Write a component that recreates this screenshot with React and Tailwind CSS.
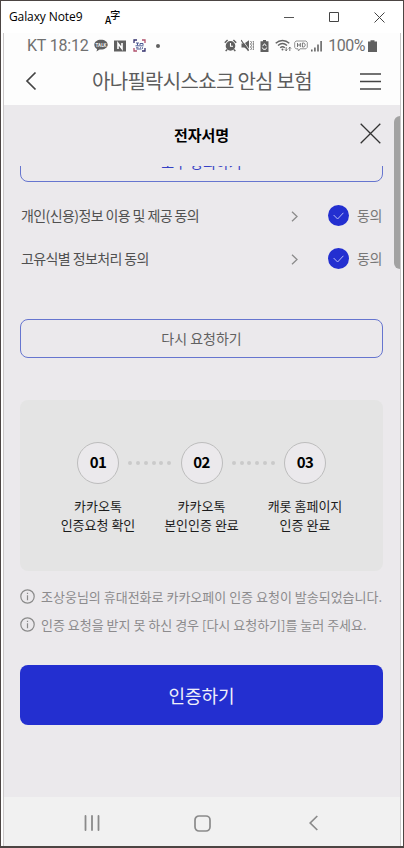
import React from "react";

const consents = ["개인(신용)정보 이용 및 제공 동의", "고유식별 정보처리 동의"];

const steps = [
  { no: "01", lines: ["카카오톡", "인증요청 확인"] },
  { no: "02", lines: ["카카오톡", "본인인증 완료"] },
  { no: "03", lines: ["캐롯 홈페이지", "인증 완료"] },
];

const notices = [
  "조상웅님의 휴대전화로 카카오페이 인증 요청이 발송되었습니다.",
  "인증 요청을 받지 못 하신 경우 [다시 요청하기]를 눌러 주세요.",
];

function WindowBar() {
  return (
    <div className="flex h-8 shrink-0 items-center bg-white pl-[8px] pr-[18px]">
      <span className="w-[96px] whitespace-nowrap font-['Open_Sans',sans-serif] text-[12px] tracking-[-0.1px] text-black">
        Galaxy Note9
      </span>
      <span className="flex items-end font-['Noto_Sans_CJK_KR',sans-serif] leading-none text-black">
        <span className="text-[10px] leading-[8px] font-medium">A</span>
        <span className="-ml-[1px] mb-[4px] text-[10px] leading-[10px] font-medium">字</span>
      </span>
      <div className="ml-auto flex items-center gap-[35px]">
        <svg width="10" height="10" viewBox="0 0 10 10" stroke="#555" fill="none">
          <path d="M0 5.5h10" />
        </svg>
        <svg width="10" height="10" viewBox="0 0 10 10" stroke="#444" fill="none">
          <path d="M.5.5h9v9h-9z" />
        </svg>
        <svg width="11" height="11" viewBox="0 0 11 11" stroke="#444" fill="none">
          <path d="M.5.5l10 10M10.500.5l-10 10" />
        </svg>
      </div>
    </div>
  );
}

function StatusBar() {
  return (
    <div className="flex h-[25px] shrink-0 items-center pl-[23px] pr-[23px] font-[Roboto,sans-serif] text-[16px] text-[#707070]">
      <span className="w-[67px] whitespace-nowrap tracking-[-0.2px]">KT 18:12</span>
      {/* talk bubble */}
      <svg width="14" height="13" viewBox="0 0 14 13">
        <path d="M7 .8C3.200.8.3 2.900.3 5.700c0 1.800 1.100 3.300 2.800 4.200L2.500 12.500l3.100-2.100c4.700.5 8.100-1.800 8.100-4.700C13.700 2.900 10.800.8 7 .8z" fill="#606060" />
        <text x="7" y="7.600" fontSize="4.500" fontWeight="700" fill="#eee" textAnchor="middle">TALK</text>
      </svg>
      <svg className="ml-[6px]" width="12" height="12" viewBox="0 0 12 12">
        <path d="M0 .5h12v11H0z" fill="#606060" />
        <path d="M4 9V3.300L8 8.700V3" stroke="#fff" strokeWidth="1.600" fill="none" />
      </svg>
      <svg className="ml-[7px]" width="13" height="13" viewBox="0 0 13 13" fill="none">
        <path d="M1 4V1h3M12 9v3H9" stroke="#33306c" strokeWidth="1.300" />
        <path d="M9 1h3v3M4 12H1V9" stroke="#b0506c" strokeWidth="1.300" />
        <path d="M3 4h3M4.500 4v2.500M7 6V4.500h3V6M3 8.800h2.500M7 8.800h1M9.500 8.300v1.500M3.500 10h5M2.500 6.800h8" stroke="#4c5a93" />
      </svg>
      <span className="ml-[10px] size-[4px] rounded-full bg-[#606060]" />
      <div className="ml-auto flex items-center">
        {/* alarm */}
        <svg width="13" height="13" viewBox="0 0 13 13" fill="none">
          <circle cx="6.500" cy="6.900" r="4.800" fill="#606060" />
          <path d="M.8 3.800L3.600 1M12.200 3.800L9.400 1M3 10.500l-1.300 1.600M10 10.500l1.300 1.600" stroke="#606060" strokeWidth="1.500" />
          <path d="M6.500 4v3.200h2.500" stroke="#fff" strokeWidth="1.100" />
        </svg>
        {/* vibrate / muted */}
        <svg className="ml-[4px]" width="13" height="13" viewBox="0 0 13 13" fill="none">
          <path d="M.5 4.500h2.800L8 1.200v10.300L3.300 8.500H.5z" fill="#606060" />
          <path d="M1.200.6l7.500 10.800" stroke="#fff" strokeWidth=".8" />
          <path d="M0 1l7.500 10.800" stroke="#606060" strokeWidth="1.200" />
          <path d="M9.600 2l.9 1.500-.9 1.500.9 1.500-.9 1.500.9 1.500-.9 1.500M12 2l.8 1.500-.8 1.500.8 1.500-.8 1.500.8 1.500-.8 1.500" stroke="#606060" strokeWidth=".9" />
        </svg>
        {/* battery saver */}
        <svg className="ml-[6px]" width="9" height="12" viewBox="0 0 9 12" fill="none">
          <path d="M3 0h3v1.300h2.500V12h-8V1.300H3z" fill="#606060" />
          <path d="M2.600 6.200L4.500 3.700l1.900 2.500M2.300 7.500l1 1.800h2.400l1-1.800" stroke="#fff" strokeWidth="1" />
        </svg>
        {/* wifi */}
        <svg className="ml-[6px]" width="17" height="13" viewBox="0 0 17 13" fill="none" stroke="#666">
          <path d="M.7 4.200c4-3.600 9.600-3.600 13.600 0M3 6.500c2.700-2.300 6.300-2.300 9 0M5.200 8.800c1.400-1.200 3.200-1.200 4.600 0" strokeWidth="1.400" />
          <circle cx="7.500" cy="10.500" r="1" fill="#666" stroke="none" />
          <path d="M11.200 8.200v3.600M10 10.500l1.200 1.300 1.200-1.300M14.800 12V8.200M13.600 9.500l1.200-1.300L16 9.500" strokeWidth=".9" />
        </svg>
        <svg className="ml-[2px]" width="14" height="12" viewBox="0 0 14 12" fill="none" stroke="#888">
          <path d="M2 1h10l1.300 1.300v5L12 8.800H6L4.500 11 4 8.800H2L.7 7.500v-5z" strokeWidth=".9" />
          <path d="M3.500 3v4M6.300 3v4M3.500 5h2.800M8.400 3v4h1c2.300 0 2.300-4 0-4z" stroke="#666" strokeWidth=".9" />
        </svg>
        <svg className="ml-[3px]" width="11" height="12" viewBox="0 0 11 12" stroke="#666" strokeWidth="1.600">
          <path d="M.8 11.500V9.500M3.900 11.500v-4M7 11.500v-7M10.100 11.500V1" />
        </svg>
        <span className="ml-[6px] tracking-[-0.5px]">100%</span>
        <svg className="ml-[3px]" width="9" height="12" viewBox="0 0 9 12">
          <path d="M2.500.2h4v1.300H9V12H0V1.500h2.500z" fill="#606060" />
        </svg>
      </div>
    </div>
  );
}

function OutlineButton({ children, className }) {
  return (
    <button
      className={`flex h-[39px] w-full shrink-0 items-center justify-center rounded-[8px] border border-[#6675cf] text-[14px] ${className}`}
    >
      {children}
    </button>
  );
}

function ConsentRow({ label }) {
  return (
    <div className="flex h-[43px] shrink-0 items-center">
      <span className="whitespace-nowrap pl-[1px] text-[14px] tracking-[-0.6px] text-[#505050]">{label}</span>
      <svg className="ml-auto mt-[2px]" width="7" height="11" viewBox="0 0 7 11" fill="none" stroke="#8b8b8b" strokeWidth="1.300">
        <path d="M1 .8l5 4.700-5 4.700" />
      </svg>
      <span className="ml-[30px] flex size-[21px] items-center justify-center rounded-full bg-[#232fd0]">
        <svg width="11" height="8" viewBox="0 0 11 8" fill="none" stroke="#b8bcf5">
          <path d="M.6 3l4 4L10.400.8" />
        </svg>
      </span>
      <span className="ml-[8px] w-[26px] whitespace-nowrap text-[14px] tracking-[-0.4px] text-[#777]">동의</span>
    </div>
  );
}

function Dots() {
  return (
    <div className="flex w-[43px] items-center justify-between">
      {[0, 1, 2, 3, 4, 5].map((i) => (
        <span key={i} className="size-[4px] rounded-full bg-[#cacaca]" />
      ))}
    </div>
  );
}

function StepPanel() {
  return (
    <div className="mt-[42px] h-[171px] shrink-0 rounded-[8px] bg-[#e4e4e4] pt-[42px]">
      <div className="flex items-center justify-center gap-[9.250px]">
        {steps.map((s, i) => (
          <React.Fragment key={s.no}>
            {i > 0 && <Dots />}
            <div className="flex size-[42px] items-center justify-center rounded-full border border-[#bdbdbd] bg-[#ebe9ec] pb-[1px] text-[15px] font-bold tracking-[-0.7px] text-black">
              {s.no}
            </div>
          </React.Fragment>
        ))}
      </div>
      <div className="mt-[13px] flex justify-center">
        {steps.map((s) => (
          <div key={s.no} className="w-[103.500px] whitespace-nowrap text-center text-[13px] leading-[18.500px] text-[#1c1c1c]">
            {s.lines.map((line) => (
              <p key={line}>{line}</p>
            ))}
          </div>
        ))}
      </div>
    </div>
  );
}

function Notice({ text }) {
  return (
    <div className="flex h-[28px] items-center gap-[6px]">
      <svg className="-mt-[2px] shrink-0" width="15" height="15" viewBox="0 0 15 15" fill="none" stroke="#8a8a8a">
        <circle cx="7.500" cy="7.500" r="6.700" strokeWidth="1.200" />
        <path d="M7.500 6.300v5M7.500 3.700v1.300" strokeWidth="1.200" />
      </svg>
      <span className="-mt-[1px] whitespace-nowrap text-[13px] text-[#8c8b8d]">{text}</span>
    </div>
  );
}

export default function App() {
  return (
    <div className="flex h-[848px] w-[404px] flex-col overflow-hidden border border-b-2 border-[#4c4543] bg-white font-['Noto_Sans_CJK_KR',sans-serif]">
      <WindowBar />
      <div className="ml-[2px] mr-[2px] flex min-h-0 flex-1 flex-col border-x border-[#cbc8c9] bg-[#fdfdfd]">
        <StatusBar />

        {/* App header */}
        <div className="flex h-[47px] shrink-0 items-center pb-[1px] pl-[21px] pr-[19px]">
          <svg width="12" height="20" viewBox="0 0 12 20" fill="none" stroke="#444" strokeWidth="1.700">
            <path d="M10.500 1.500L2 10l8.500 8.500" />
          </svg>
          <h1 className="flex-1 whitespace-nowrap pl-[55px] text-[20px] font-normal tracking-[-0.7px] text-[#5c5c5c]">
            아나필락시스쇼크 안심 보험
          </h1>
          <svg width="21" height="17" viewBox="0 0 21 17" stroke="#444" strokeWidth="1.600">
            <path d="M0 1h21M0 8.500h21M0 16h21" />
          </svg>
        </div>

        <div className="relative flex min-h-0 flex-1 flex-col bg-[#ebe9ec]">
          <div className="grid h-[61px] shrink-0 grid-cols-[1fr_auto_1fr] items-center pl-[18px] pr-[19px]">
            <h2 className="col-start-2 text-[15px] font-bold text-black">전자서명</h2>
            <svg className="-mt-[4px] justify-self-end" width="21" height="21" viewBox="0 0 21 21" stroke="#333" strokeWidth="1.300">
              <path d="M.7.7l19.600 19.600M20.300.7L.7 20.300" />
            </svg>
          </div>

          <div className="min-h-0 flex-1 overflow-hidden pl-[16px] pr-[17px]">
            <div className="-mt-[23px] flex flex-col">
              <OutlineButton className="text-[#3540c4]">모두 동의하기</OutlineButton>
              <div className="mt-[12px]">
                {consents.map((label) => (
                  <ConsentRow key={label} label={label} />
                ))}
              </div>
              <OutlineButton className="mt-[39px] text-[#606060]">다시 요청하기</OutlineButton>
              <StepPanel />
              <div className="mt-[12px]">
                {notices.map((text) => (
                  <Notice key={text} text={text} />
                ))}
              </div>
              <button className="mt-[26px] h-[60px] w-full rounded-[8px] bg-[#232fd0] text-[18px] text-[#f0f0fa]">
                인증하기
              </button>
            </div>
          </div>

          {/* Scroll thumb */}
          <div className="absolute right-0 top-[11px] h-[153px] w-[6px] rounded-l-full bg-[#a2a2a2]" />
        </div>

        {/* Android navigation */}
        <div className="flex h-[49px] shrink-0 items-center bg-[#f1f1f1] pl-[80px] pr-[82px] pt-[3px]">
          <svg width="16" height="16" viewBox="0 0 16 16" stroke="#8a8a8a" strokeWidth="1.800" strokeLinecap="round">
            <path d="M1.500 1v14M8 1v14M14.500 1v14" />
          </svg>
          <svg className="ml-[94px] mr-auto" width="17" height="17" viewBox="0 0 17 17" fill="none" stroke="#8a8a8a" strokeWidth="1.700">
            <rect x="1" y="1" width="15" height="15" rx="4" />
          </svg>
          <svg width="9" height="16" viewBox="0 0 9 16" fill="none" stroke="#8a8a8a" strokeWidth="1.700">
            <path d="M8.300 1L1.200 8l7.100 7" />
          </svg>
        </div>
      </div>
    </div>
  );
}
